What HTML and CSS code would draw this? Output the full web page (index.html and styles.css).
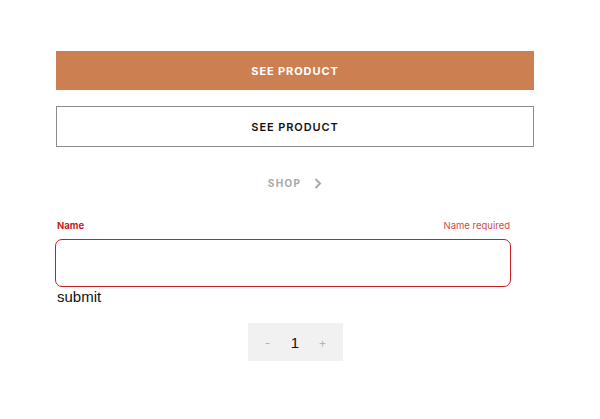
FILE: index.html
```html
<!DOCTYPE html>
<html>
<head>
<meta charset="utf-8">
<link rel="stylesheet" href="styles.css">
</head>
<body>
<main class="page">
  <button class="btn btn-filled">SEE PRODUCT</button>
  <button class="btn btn-outline">SEE PRODUCT</button>
  <a class="shop-link">SHOP
    <svg class="chev" width="8" height="11" viewBox="0 0 8 11"><path d="M1.5 1 L6 5.5 L1.5 10" fill="none" stroke="#a8a8a8" stroke-width="2"/></svg>
  </a>
  <div class="field">
    <div class="field-head">
      <span class="field-label">Name</span>
      <span class="field-error">Name required</span>
    </div>
    <div class="field-input"></div>
  </div>
  <div class="submit">submit</div>
  <div class="qty">
    <span class="qty-btn">-</span>
    <span class="qty-val">1</span>
    <span class="qty-btn">+</span>
  </div>
</main>
</body>
</html>
```
FILE: styles.css
```css
html, body { margin: 0; padding: 0; background: #fff; }
body { font-family: Inter, "Liberation Sans", sans-serif; }
.page {
  width: 478px;
  padding: 51px 0 0 56px;
  display: flex;
  flex-direction: column;
}
.btn {
  display: block;
  width: 478px;
  font-family: Inter, sans-serif;
  font-size: 11px;
  letter-spacing: 0.9px;
  font-weight: 700;
  border: none;
  padding: 0;
  margin: 0;
  cursor: pointer;
}
.btn-filled {
  height: 39px;
  background: #cc8052;
  color: #fff;
}
.btn-outline {
  margin-top: 16px;
  height: 41px;
  background: #fff;
  color: #111;
  border: 1px solid #8c8c8c;
  font-weight: 600;
}
.shop-link {
  align-self: center;
  margin-top: 29px;
  display: flex;
  align-items: center;
  gap: 13px;
  font-size: 10px;
  font-weight: 700;
  letter-spacing: 1.3px;
  color: #a8a8a8;
  height: 14px;
}
.field {
  width: 456px;
  margin-top: 30px;
  margin-left: -1px;
}
.field-head {
  display: flex;
  justify-content: space-between;
  font-size: 9.5px;
  color: #c62828;
  height: 12px;
  line-height: 12px;
  padding: 0 1px 0 2px;
}
.field-label { font-weight: 700; color: #c21f1f; }
.field-error { color: #cf4a4a; }
.field-input {
  margin-top: 7px;
  height: 46px;
  border: 1.5px solid #c81e1e;
  border-radius: 7px;
}
.submit {
  font-family: "Liberation Sans", Arial, sans-serif;
  font-size: 15px;
  line-height: 18px;
  color: #111;
  margin-top: 1px;
  padding-left: 1px;
}
.qty {
  align-self: center;
  margin-top: 17px;
  width: 95px;
  height: 38px;
  background: #f1f1f1;
  display: flex;
  align-items: center;
  justify-content: space-between;
  padding: 0 16px 0 16px;
  box-sizing: border-box;
}
.qty-btn { font-size: 12px; color: #b5b5b5; width: 8px; text-align: center; }
.qty-val { font-size: 15px; color: #111; font-family: "Liberation Sans", Arial, sans-serif; }
```
